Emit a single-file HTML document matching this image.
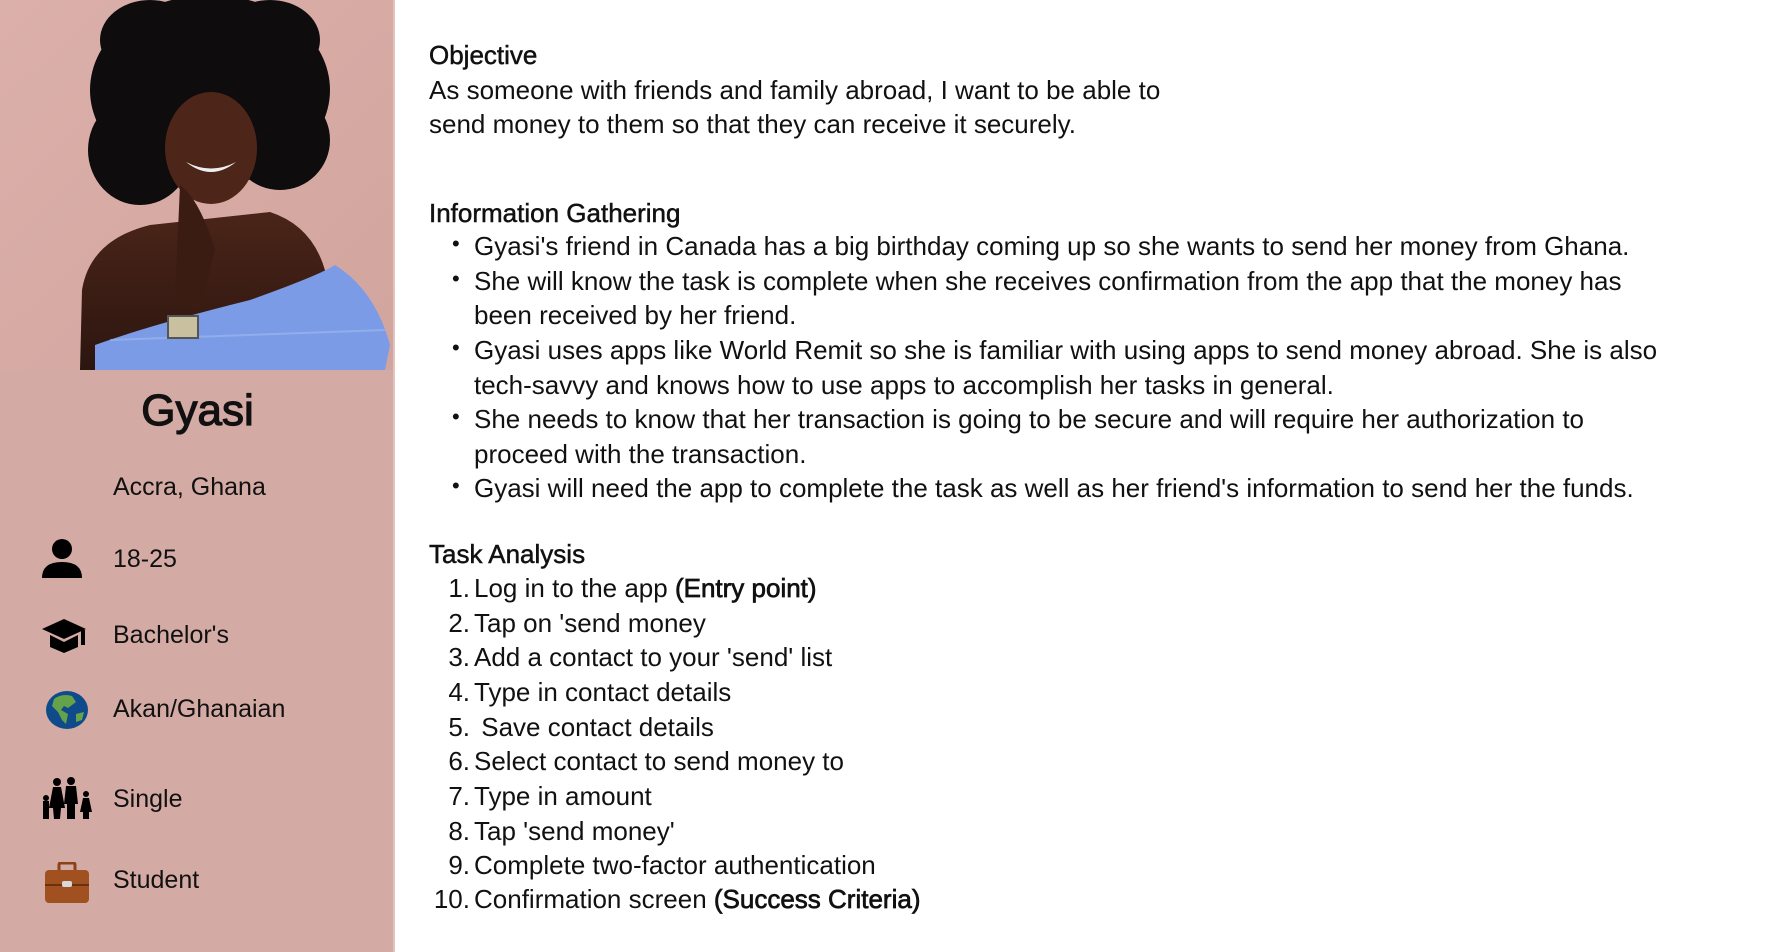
<!DOCTYPE html>
<html><head><meta charset="utf-8"><style>
*{margin:0;padding:0;box-sizing:border-box}
body{width:1782px;height:952px;background:#fff;font-family:"Liberation Sans",sans-serif;color:#111;position:relative;overflow:hidden}
.side{position:absolute;left:0;top:0;width:395px;height:952px;background:#d4aaa4;border-right:2px solid #e2c4bf}
.t{position:absolute;white-space:nowrap;font-size:26px;line-height:30px}
.s{position:absolute;left:113px;font-size:25px;line-height:30px;white-space:nowrap}
.ic{position:absolute;left:40px}
b{font-weight:normal;-webkit-text-stroke:0.7px #111}
.h{-webkit-text-stroke:0.5px #111}
.bul{position:absolute;left:452px;font-size:22px}
.num{position:absolute;width:40px;text-align:right;left:430px;font-size:26px;line-height:30px}
</style></head><body>
<div class="side">
<svg width="393" height="370" style="position:absolute;left:0;top:0">
<defs><linearGradient id="bg" x1="0" y1="0" x2="1" y2="1"><stop offset="0" stop-color="#dcb0aa"/><stop offset="1" stop-color="#d2a49e"/></linearGradient>
<linearGradient id="sk" x1="0" y1="0" x2="0" y2="1"><stop offset="0" stop-color="#4a2418"/><stop offset="1" stop-color="#2c1610"/></linearGradient></defs>
<rect width="393" height="370" fill="url(#bg)"/>
<path d="M80 370 L82 290 Q90 240 150 225 L270 212 Q325 230 330 300 L335 370 Z" fill="url(#sk)"/>
<ellipse cx="210" cy="90" rx="120" ry="95" fill="#0e0c0d"/>
<ellipse cx="140" cy="150" rx="52" ry="55" fill="#0e0c0d"/>
<ellipse cx="280" cy="140" rx="50" ry="50" fill="#0e0c0d"/>
<ellipse cx="150" cy="40" rx="50" ry="40" fill="#0e0c0d"/>
<ellipse cx="270" cy="40" rx="50" ry="40" fill="#0e0c0d"/>
<ellipse cx="211" cy="148" rx="46" ry="56" fill="#4e2619"/>
<path d="M186 162 Q211 182 236 162 Q211 175 186 162Z" fill="#eee"/>
<path d="M180 185 Q200 200 215 250 L200 310 L175 300 Z" fill="#3a1c12"/>
<path d="M95 345 Q150 325 250 300 Q320 275 335 265 Q375 290 390 345 L385 370 L95 370 Z" fill="#7b9be6"/>
<path d="M110 340 L385 330" stroke="#a8bff0" stroke-width="2" opacity=".5"/>
<rect x="168" y="316" width="30" height="22" fill="#c9c0a0" stroke="#555" stroke-width="2"/>
</svg>
<div style="position:absolute;left:0;width:395px;top:385px;text-align:center;font-size:44px;line-height:52px;-webkit-text-stroke:1.2px #111">Gyasi</div>
<div class="s" style="top:472px">Accra, Ghana</div>
<svg class="ic" width="44" height="40" style="top:538px" viewBox="0 0 44 40"><circle cx="22" cy="11" r="10" fill="#000"/><path d="M2 40 Q2 24 22 24 Q42 24 42 40Z" fill="#000"/></svg>
<div class="s" style="top:544px">18-25</div>
<svg class="ic" width="48" height="38" style="top:617px" viewBox="0 0 48 38"><path d="M2 12 L24 2 L46 12 L24 22Z" fill="#000"/><path d="M10 18 L10 30 L24 36 L38 30 L38 18 L24 25Z" fill="#000"/><rect x="41" y="13" width="4" height="15" fill="#000"/></svg>
<div class="s" style="top:620px">Bachelor's</div>
<svg class="ic" width="46" height="40" style="top:690px;left:46px" viewBox="0 0 46 40"><ellipse cx="21" cy="20" rx="21" ry="19" fill="#0f4a8a"/><path d="M8 9 Q16 3 26 6 L30 12 L22 18 L18 16 L15 20 L22 24 L20 34 L16 30 L12 22 L6 16Z" fill="#64a34a"/><path d="M30 24 L38 22 L36 30 L30 32Z" fill="#64a34a"/></svg>
<div class="s" style="top:694px">Akan/Ghanaian</div>
<svg class="ic" width="56" height="44" style="top:776px" viewBox="0 0 56 44"><circle cx="6" cy="22" r="3" fill="#000"/><rect x="3" y="25" width="6" height="18" fill="#000"/><circle cx="17" cy="6" r="4" fill="#000"/><path d="M13 11 L21 11 L25 32 L21 32 L20 43 L14 43 L13 32 L9 32Z" fill="#000"/><circle cx="31" cy="5" r="4" fill="#000"/><path d="M26 10 L36 10 L38 28 L35 28 L35 43 L27 43 L27 28 L24 28Z" fill="#000"/><circle cx="46" cy="18" r="3" fill="#000"/><path d="M43 22 L49 22 L52 36 L49 36 L49 43 L43 43 L43 36 L40 36Z" fill="#000"/></svg>
<div class="s" style="top:784px">Single</div>
<svg class="ic" width="46" height="42" style="top:862px;left:44px" viewBox="0 0 46 42"><path d="M15 8 L15 3 Q15 1 17 1 L29 1 Q31 1 31 3 L31 8" stroke="#8a4216" stroke-width="3" fill="none"/><rect x="1" y="8" width="44" height="33" rx="4" fill="#a0511f"/><rect x="1" y="22" width="44" height="2" fill="#6b3010"/><rect x="18" y="19" width="10" height="6" rx="2" fill="#d8d8d8"/></svg>
<div class="s" style="top:865px">Student</div>
</div>

<div class="t h" style="left:429px;top:40px">Objective</div>
<div class="t" style="left:429px;top:75px">As someone with friends and family abroad, I want to be able to</div>
<div class="t" style="left:429px;top:109px">send money to them so that they can receive it securely.</div>

<div class="t h" style="left:429px;top:198px">Information Gathering</div>
<div class="bul" style="top:231px">•</div><div class="t" style="left:474px;top:231px">Gyasi's friend in Canada has a big birthday coming up so she wants to send her money from Ghana.</div>
<div class="bul" style="top:266px">•</div><div class="t" style="left:474px;top:266px">She will know the task is complete when she receives confirmation from the app that the money has</div>
<div class="t" style="left:474px;top:300px">been received by her friend.</div>
<div class="bul" style="top:335px">•</div><div class="t" style="left:474px;top:335px">Gyasi uses apps like World Remit so she is familiar with using apps to send money abroad. She is also</div>
<div class="t" style="left:474px;top:370px">tech-savvy and knows how to use apps to accomplish her tasks in general.</div>
<div class="bul" style="top:404px">•</div><div class="t" style="left:474px;top:404px">She needs to know that her transaction is going to be secure and will require her authorization to</div>
<div class="t" style="left:474px;top:439px">proceed with the transaction.</div>
<div class="bul" style="top:473px">•</div><div class="t" style="left:474px;top:473px">Gyasi will need the app to complete the task as well as her friend's information to send her the funds.</div>

<div class="t h" style="left:429px;top:539px">Task Analysis</div>
<div class="num" style="top:573px">1.</div><div class="t" style="left:474px;top:573px">Log in to the app <b>(Entry point)</b></div>
<div class="num" style="top:608px">2.</div><div class="t" style="left:474px;top:608px">Tap on 'send money</div>
<div class="num" style="top:642px">3.</div><div class="t" style="left:474px;top:642px">Add a contact to your 'send' list</div>
<div class="num" style="top:677px">4.</div><div class="t" style="left:474px;top:677px">Type in contact details</div>
<div class="num" style="top:712px">5.</div><div class="t" style="left:474px;top:712px">&nbsp;Save contact details</div>
<div class="num" style="top:746px">6.</div><div class="t" style="left:474px;top:746px">Select contact to send money to</div>
<div class="num" style="top:781px">7.</div><div class="t" style="left:474px;top:781px">Type in amount</div>
<div class="num" style="top:816px">8.</div><div class="t" style="left:474px;top:816px">Tap 'send money'</div>
<div class="num" style="top:850px">9.</div><div class="t" style="left:474px;top:850px">Complete two-factor authentication</div>
<div class="num" style="top:884px">10.</div><div class="t" style="left:474px;top:884px">Confirmation screen <b>(Success Criteria)</b></div>
</body></html>
